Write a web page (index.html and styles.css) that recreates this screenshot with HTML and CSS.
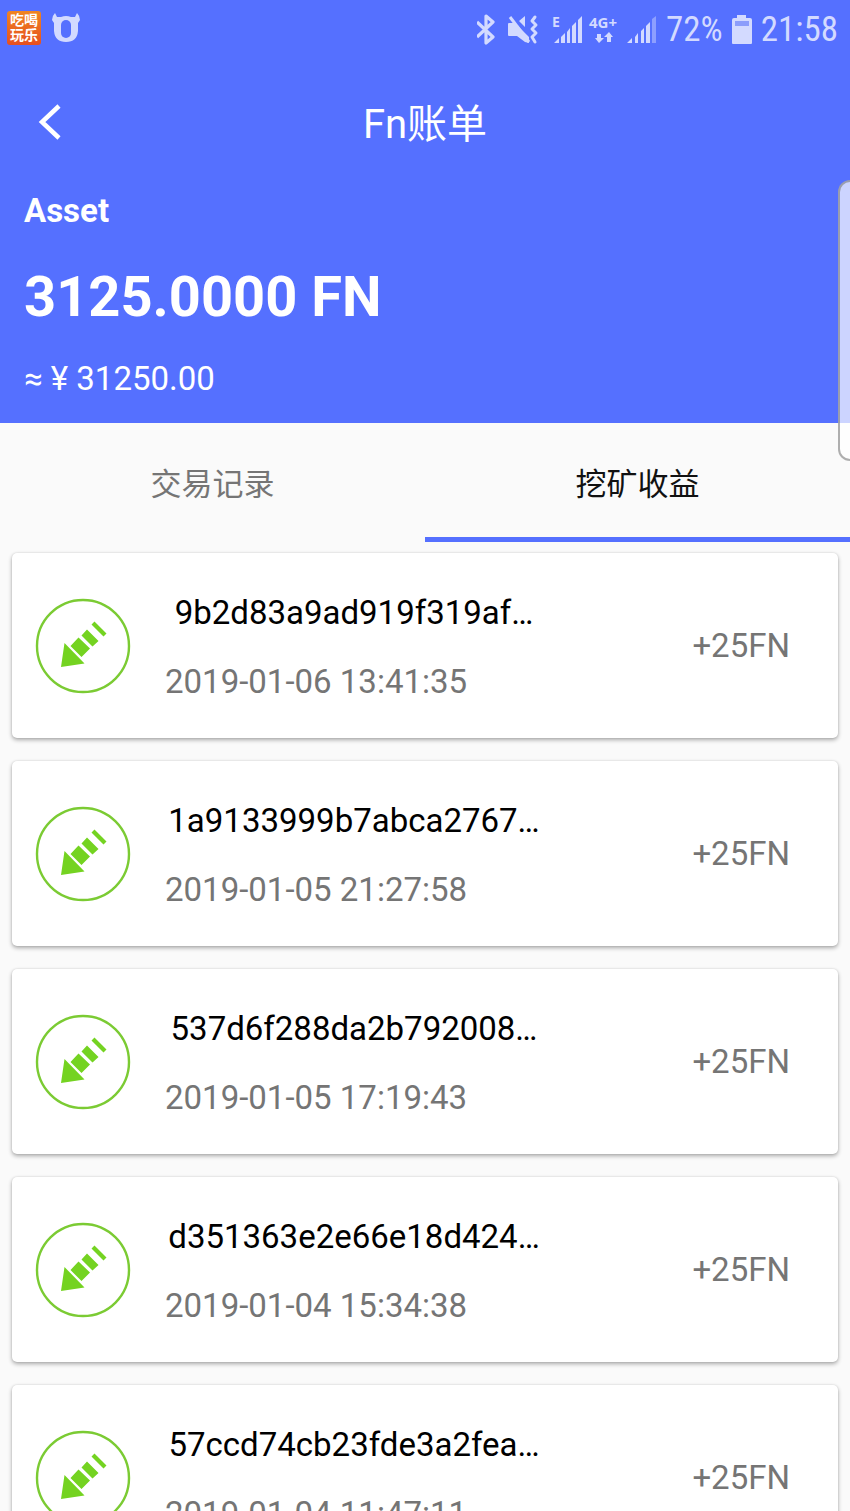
FILE: index.html
```html
<!DOCTYPE html>
<html lang="zh-CN">
<head>
<meta charset="utf-8">
<meta name="viewport" content="width=device-width, initial-scale=1">
<title>Fn账单</title>
<link rel="stylesheet" href="styles.css">
</head>
<body>
<svg class="defs" aria-hidden="true">
  <symbol id="mine" viewBox="0 0 96 96">
    <circle cx="48" cy="48" r="46" fill="none" stroke="#7bcb33" stroke-width="2.4"/>
    <path fill="#74d321" d="M29.500 45 26 69 49.500 65.500ZM43.500 39.500 55 50.500 46.500 59 35.500 48ZM52 31.500 63.500 43 57.500 48.500 46.500 37.500ZM59.500 23.500 71.500 35.500 68.500 38.500 56.500 26.500Z"/>
  </symbol>
</svg>
<header class="header">
  <div class="status">
    <div class="status-group start">
      <span class="app-badge"><span>吃喝</span><span>玩乐</span></span>
      <svg class="bull" width="30" height="30" viewBox="0 0 30 30">
        <path fill="#d3daff" d="M4 0 6 4H10Q15 2 20 4H24L26 0Q29 3 29 7L27 10V18Q26 29 15 29 4 29 3 18V10L1 7Q1 3 4 0Z"/>
        <rect x="10" y="7" width="10" height="18" rx="5" fill="#5570ff"/>
      </svg>
    </div>
    <div class="status-group">
      <svg width="180" height="58" viewBox="477 0 180 58">
        <path fill="none" stroke="#d3daff" stroke-width="3.2" stroke-linejoin="round" d="M477 21 493 36 486 42V15L493 21 477 36"/>
        <path fill="#d3daff" d="M508 23Q508 22 509 22H515L529 36V42L525 41 517 35H509Q508 35 508 34ZM519 20 525 15V26Z"/>
        <path fill="none" stroke="#d3daff" stroke-width="3" d="M510 16 529 41"/>
        <path fill="none" stroke="#d3daff" stroke-width="3" stroke-linecap="round" stroke-linejoin="round" d="M535 16 532 20 536 24 532 28 536 32 532 36 535 41"/>
        <g fill="#d3daff">
          <path d="M554 42 559 37V42ZM561 36 565 32V42H561ZM567 31 570 27V42H567ZM572 25 576 21V42H572ZM578 19 582 15V42H578Z"/>
          <path d="M597 33H601V37H604L599 42 595 37H597ZM607 41V36H604L609 31 613 36H611V41Z"/>
          <path d="M627 42 632 37V42ZM635 36 638 32V42H635ZM641 30 644 27V42H641ZM646 25 650 21V42H646Z"/>
          <path opacity=".45" d="M652 18 656 15V42H652Z"/>
        </g>
        <text class="net" x="552" y="26" font-size="14">E</text>
        <text class="net" x="589" y="27" font-size="15">4G+</text>
      </svg>
      <span class="status-text">72%</span>
      <svg width="20" height="30" viewBox="0 0 20 30">
        <path fill="#d3daff" d="M5 0H14V3H18Q20 3 20 5V28Q20 29 19 29H1Q0 29 0 28V5Q0 3 2 3H5Z"/>
        <path fill="#8c9dfb" d="M3 6H17V11H3Z"/>
      </svg>
      <time class="status-text">21:58</time>
    </div>
  </div>
  <div class="title-bar">
    <button class="back" aria-label="返回">
      <svg width="24" height="36" viewBox="0 0 24 36"><path fill="none" stroke="#fff" stroke-width="4.500" d="M21 2 4 18 21 34"/></svg>
    </button>
    <h1>Fn账单</h1>
  </div>
  <section class="asset">
    <h2>Asset</h2>
    <p class="amount">3125.0000 FN</p>
    <p class="fiat">≈ ¥ 31250.00</p>
  </section>
</header>
<nav class="tabs">
  <button class="tab">交易记录</button>
  <button class="tab active" aria-current="page">挖矿收益</button>
</nav>
<main class="list">
  <article class="card"><svg class="icon"><use href="#mine"/></svg><div class="info"><p class="hash">9b2d83a9ad919f319af…</p><time>2019-01-06 13:41:35</time></div><span class="gain">+25FN</span></article>
  <article class="card"><svg class="icon"><use href="#mine"/></svg><div class="info"><p class="hash">1a9133999b7abca2767…</p><time>2019-01-05 21:27:58</time></div><span class="gain">+25FN</span></article>
  <article class="card"><svg class="icon"><use href="#mine"/></svg><div class="info"><p class="hash">537d6f288da2b792008…</p><time>2019-01-05 17:19:43</time></div><span class="gain">+25FN</span></article>
  <article class="card"><svg class="icon"><use href="#mine"/></svg><div class="info"><p class="hash">d351363e2e66e18d424…</p><time>2019-01-04 15:34:38</time></div><span class="gain">+25FN</span></article>
  <article class="card"><svg class="icon"><use href="#mine"/></svg><div class="info"><p class="hash">57ccd74cb23fde3a2fea…</p><time>2019-01-04 11:47:11</time></div><span class="gain">+25FN</span></article>
</main>
<div class="edge-handle"></div>
</body>
</html>
```
FILE: styles.css
```css
* {
  box-sizing: border-box;
  margin: 0;
}

body {
  display: flex;
  flex-direction: column;
  height: 100vh;
  overflow: hidden;
  background: #fafafa;
  font: 33px/40px Roboto, "Noto Sans CJK SC", sans-serif;
}

button {
  border: 0;
  padding: 0;
  background: none;
  font: inherit;
  cursor: pointer;
}

.defs {
  display: none;
}

.header {
  flex: none;
  background: #5570ff;
  color: #fff;
}

.status {
  display: flex;
  justify-content: space-between;
  height: 60px;
  padding: 0 12px 0 7px;
}

.status-group {
  display: flex;
  align-items: center;
  gap: 9px;
}

.status-group.start {
  gap: 10px;
  padding-bottom: 4px;
}

.status-text {
  color: #d3daff;
  font-family: "Roboto Condensed", "Liberation Sans Narrow", Roboto, sans-serif;
  font-size: 35px;
}

.net {
  fill: #d3daff;
  font-family: "Open Sans", sans-serif;
  font-weight: 700;
}

.app-badge {
  display: flex;
  flex-direction: column;
  align-items: center;
  justify-content: center;
  width: 34px;
  height: 34px;
  border-radius: 3px;
  background: linear-gradient(#ef8521, #e64f20);
  font-size: 14px;
  font-weight: 700;
  line-height: 15px;
}

.title-bar {
  display: grid;
  grid-template-columns: 62px 1fr 62px;
  align-items: center;
  height: 124px;
}

.back {
  display: flex;
  justify-content: flex-end;
}

h1 {
  padding-top: 6px;
  font-size: 40px;
  font-weight: 400;
  line-height: 48px;
  text-align: center;
}

.asset {
  padding: 7px 24px 24px;
}

h2 {
  font-size: 33px;
  font-weight: 700;
}

.amount {
  margin: 34px 0 30px;
  font-size: 56px;
  font-weight: 700;
  line-height: 64px;
}

.tabs {
  display: grid;
  flex: none;
  grid-template-columns: 1fr 1fr;
  height: 119px;
}

.tab {
  padding-top: 10px;
  border-bottom: 5px solid transparent;
  color: #757575;
  font-size: 31px;
}

.tab.active {
  border-bottom-color: #5570ff;
  color: #111;
}

.list {
  display: flex;
  flex: 1;
  flex-direction: column;
  gap: 23px;
  min-height: 0;
  padding: 11px 12px 0;
  overflow: hidden;
}

.card {
  display: flex;
  flex: none;
  align-items: center;
  padding: 36px 48px 36px 23px;
  border-radius: 5px;
  background: #fff;
  box-shadow: 0 2px 4px rgba(0, 0, 0, .32), 0 0 2px rgba(0, 0, 0, .12);
  color: #757575;
}

.icon {
  flex: none;
  width: 96px;
  height: 96px;
}

.info {
  display: flex;
  flex-direction: column;
  gap: 25px;
  margin: 0 auto 0 34px;
}

.hash {
  min-width: 378px;
  color: #000;
  line-height: 48px;
  text-align: center;
}

.edge-handle {
  position: fixed;
  top: 180px;
  right: 0;
  width: 12px;
  height: 281px;
  border: 2px solid rgba(120, 120, 120, .6);
  border-right: 0;
  border-radius: 14px 0 0 14px;
  background: rgba(255, 255, 255, .7);
}
```
